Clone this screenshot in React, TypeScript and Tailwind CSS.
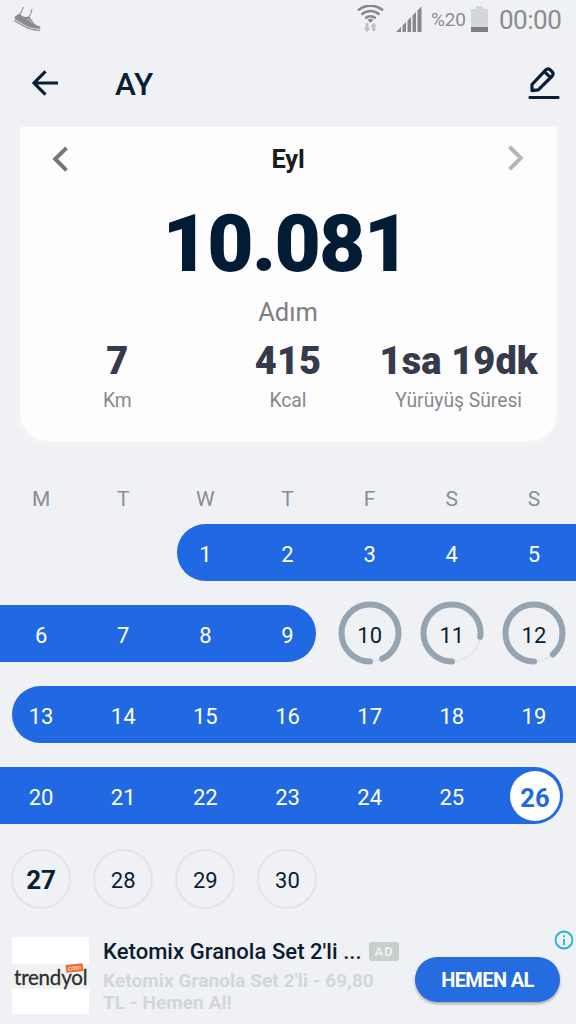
import React from "react";

type Day = {
  day: number
  type: "goal" | "ring" | "empty" | "selected" | "today"
  progress?: number
}

const weekDays = ["M", "T", "W", "T", "F", "S", "S"];

const stats = [
  { value: "7", label: "Km" },
  { value: "415", label: "Kcal" },
  { value: "1sa 19dk", label: "Yürüyüş Süresi" },
];

const goalDays = (from: number, to: number): Day[] =>
  Array.from({ length: to - from + 1 }, (_, i) => ({ day: from + i, type: "goal" }));

// bar = the blue streak behind the days of that week
const weeks: { bar: string, offset: number, days: Day[] }[] = [
  { bar: "ml-[177px] rounded-l-full", offset: 2, days: goalDays(1, 5) },
  {
    bar: "mr-[260px] rounded-r-full",
    offset: 0,
    days: [
      ...goalDays(6, 9),
      { day: 10, type: "ring", progress: 0.93 },
      { day: 11, type: "ring", progress: 0.772 },
      { day: 12, type: "ring", progress: 0.885 },
    ],
  },
  { bar: "ml-[12px] rounded-l-full", offset: 0, days: goalDays(13, 19) },
  { bar: "mr-[13px] rounded-r-full", offset: 0, days: [...goalDays(20, 25), { day: 26, type: "selected" }] },
  {
    bar: "hidden",
    offset: 0,
    days: [
      { day: 27, type: "today" },
      { day: 28, type: "empty" },
      { day: 29, type: "empty" },
      { day: 30, type: "empty" },
    ],
  },
];


function StatusBar() {
  return (
    <div className="flex h-10 items-center text-[#8b8c8f]">
      <svg className="ml-3 h-7 w-8 shrink-0" viewBox="0 0 32 28" fill="none">
        <path d="M3 10.5 7.5 7.5 Q11 12 15 10.8 L17.5 10.3 22 17.5 Q24 19.5 28 20.5 L28.5 22.5 Q20 23.5 12 18.7 L2.6 13Z" fill="#8b8b8d" />
        <path d="M2.3 14.5 12.5 20.6 Q20 24.8 28.3 24.2" stroke="#8b8b8d" strokeWidth="1.2" />
        <path d="M11.8 1 Q9.5 4 8.5 8 M19.9 3 Q19.8 7 17 10.5" stroke="#9b9b9d" strokeWidth="1.2" />
        <path d="m15 14 4-1.5m-2 3 4-1.5m-2 3 3-1" stroke="#d0d1d4" strokeWidth=".7" />
      </svg>

      <svg className="ml-auto -mt-[3px] h-7 w-[27px] shrink-0" viewBox="0 0 27 28" fill="none">
        <g stroke="#87888b" strokeWidth="2.5">
          <path d="M1 5.2Q13.5-4 26 5.2" />
          <path d="M4.5 9.4Q13.5 2.5 22.5 9.4" />
          <path d="M8.2 13.3Q13.5 9.2 18.8 13.3" />
        </g>
        <path d="M10.6 14.8Q13.5 12.5 16.4 14.8L13.5 18Z" fill="#87888b" />
        <path d="M8.5 18h3v5h2L10 27.3 6.7 23h1.8zM15.2 26h3v-4.5h1.8L16.7 17.5 13.5 21.5h1.7z" fill="#c0c1c4" />
      </svg>

      <svg className="ml-3 -mt-[2px] h-[26px] w-[26px] shrink-0" viewBox="0 0 26 26" fill="#87888b">
        <path d="M0 26 5 21v5zM6.5 19.5 10 16v10H6.5zM11.5 14.5 15 11v15h-3.5zM16.5 9.5 20 6v20h-3.5zM21.5 4.5 25.5 .5V26h-4z" />
      </svg>

      <span className="ml-[9px] w-[36px] text-[19px] tracking-[-0.2px]">%20</span>

      <svg className="ml-1 -mt-[3px] h-[26px] w-[17px] shrink-0" viewBox="0 0 17 26">
        <path d="M5 0h7v3h5v23H0V3h5z" fill="#d5d6d9" />
        <path d="M0 21h17v5H0z" fill="#7d7e81" />
      </svg>

      <span className="ml-[11px] mr-[14px] w-[63px] text-[26px] tracking-[-0.5px]">00:00</span>
    </div>
  );
}


function Header() {
  return (
    <div className="flex h-[87px] items-center text-[#081e35]">
      <svg className="ml-8 -mt-px h-[26px] w-[26px]" viewBox="0 0 26 26" fill="none" stroke="currentColor" strokeWidth="3.1">
        <path d="M26 13H2M13.5 1.3 2 13l11.5 11.7" />
      </svg>
      <h1 className="ml-[57px] pt-[3px] text-[31.5px] font-medium">AY</h1>
      <svg className="ml-auto mr-4 -mt-[2px] h-8 w-8" viewBox="0 0 32 32" fill="none" stroke="currentColor" strokeWidth="3.2" strokeLinejoin="round" strokeLinecap="round">
        <path d="M4 17.5 17.8 2.9Q19.8 .9 22 2.7L24.4 5Q26 6.9 24.2 9L10.3 22.8 4 23.6ZM16.5 4.7 22.5 10.6" />
        <path d="M1.8 30.5H30.2" strokeWidth="2.8" />
      </svg>
    </div>
  );
}


function Summary() {
  return (
    <div className="ml-5 mr-[19px] h-[314px] rounded-t-[3px] rounded-b-[28px] bg-[#fdfdfd] text-center shadow-[0_2px_8px_rgba(255,255,255,0.5)]">
      <div className="flex h-16 items-center justify-between">
        <svg className="ml-8 h-[26px] w-4" viewBox="0 0 16 26" fill="none" stroke="#777" strokeWidth="4">
          <path d="M14.5 1.8 3.2 13l11.3 11.3" />
        </svg>
        <span className="pt-[1px] text-[25.5px] font-bold tracking-[-0.2px] text-[#1b1b1b]">Eyl</span>
        <svg className="mr-[33px] h-[26px] w-4" viewBox="0 0 16 26" fill="none" stroke="#b5b5b5" strokeWidth="4">
          <path d="M1.5 .8 12.8 12 1.5 23.3" />
        </svg>
      </div>
      <div className="h-[104px] pr-[6px] text-[80px] leading-[107px] font-black tracking-[-1.7px] text-[#031c35]">10.081</div>
      <div className="h-[34px] pr-px text-[25.5px] leading-[34px] text-[#7e7f82]">Adım</div>
      <div className="ml-3 mr-[13px] grid grid-cols-3">
        {stats.map((stat) => (
          <div key={stat.label}>
            <div className="h-[62px] text-[38px] leading-[64px] font-black tracking-[0.1px] whitespace-nowrap text-[#37394c]">{stat.value}</div>
            <div className="h-[18px] text-[19.3px] leading-[20px] text-[#86898d]">{stat.label}</div>
          </div>
        ))}
      </div>
    </div>
  );
}


function DayCell({ day, type, progress = 0 }: Day) {

  if (type === "ring") {
    return (
      <div className="flex items-center justify-center text-[#0a1f33]">
        <svg className="absolute h-16 w-16 rotate-90" viewBox="0 0 64 64" fill="none">
          <circle cx="32" cy="32" r="28.5" stroke="#e4e6e9" strokeWidth="2" />
          <circle cx="32" cy="32" r="28.5" stroke="#96a4b2" strokeWidth="6" strokeLinecap="round" pathLength="1" strokeDasharray={`${progress} 1`} />
        </svg>
        <span className="pt-1">{day}</span>
      </div>
    );
  }

  if (type === "selected") {
    return (
      <div className="flex items-center justify-center pl-[2px]">
        <span className="h-[50px] w-[50px] rounded-full bg-white pt-1 text-center text-[25.5px] leading-[47px] font-bold text-[#2168e0]">{day}</span>
      </div>
    );
  }

  if (type === "goal") {
    return <div className="flex items-center justify-center pt-1 text-white">{day}</div>;
  }

  return (
    <div className="flex items-center justify-center">
      <span className={`flex h-[60px] w-[60px] shrink-0 items-center justify-center rounded-full border-2 border-[#e2e4e7] pt-1 text-[#0a1f33] ${type === "today" ? "text-[26px] font-bold" : ""}`}>{day}</span>
    </div>
  );
}


function Calendar() {
  return (
    <div className="mt-[47px]">
      <div className="mr-px grid h-5 grid-cols-7 text-center text-[21px] leading-[22px] text-[#8a8e93]">
        {weekDays.map((name, i) => (
          <span key={i}>{name}</span>
        ))}
      </div>
      <div className="mt-[15.5px] flex flex-col gap-[24.3px]">
        {weeks.map((week, i) => (
          <div key={i} className="grid h-[57px]">
            <div className={`col-start-1 row-start-1 bg-[#2069e2] ${week.bar}`} />
            <div className="col-start-1 row-start-1 mr-px grid grid-cols-7 text-[22px] leading-[53px]">
              {week.offset > 0 && <div className="col-span-2" />}
              {week.days.map((item) => (
                <DayCell key={item.day} {...item} />
              ))}
            </div>
          </div>
        ))}
      </div>
    </div>
  );
}


function AdBanner() {
  return (
    <div className="mt-[31.3px] flex h-[87px]">
      <div className="ml-3 h-[77px] w-[77px] shrink-0 bg-white pt-[27px]">
        <div className="relative h-[25px] bg-[#f1f2f4] pl-[2px] font-['Lato',sans-serif]">
          <span className="block text-[20.5px] leading-[26px] tracking-[-0.2px] text-[#2e2e2e] [-webkit-text-stroke:0.3px_#2e2e2e]">trendyol</span>
          <span className="absolute top-0 right-[6px] h-[8px] w-[17px] -rotate-6 bg-[#f26b2c] text-center text-[7px] leading-[7px] text-white">com</span>
        </div>
      </div>

      <div className="ml-[14px] w-[312px] shrink-0">
        <div className="flex h-[30px] items-center">
          <span className="w-[266px] text-[22px] font-medium tracking-[0.05px] whitespace-nowrap text-[#0b1d31]">Ketomix Granola Set 2'li ...</span>
          <span className="h-[19px] w-[30px] rounded-[3px] bg-[#c5cfcb] text-center text-[13px] leading-[19px] font-bold tracking-[0.8px] text-[#edf1f0]">AD</span>
        </div>
        <p className="mt-[3px] text-[19px] leading-[22px] font-bold tracking-[0.08px] whitespace-nowrap text-[#d3d6d9]">
          Ketomix Granola Set 2'li - 69,80<br />
          TL - Hemen Al!
        </p>
      </div>

      <div className="mt-5 h-[45px] w-[145px] shrink-0 rounded-full bg-[#246ce0] text-center text-[20px] leading-[47px] font-bold tracking-[-0.6px] text-white shadow-[0_2px_3px_rgba(0,0,0,0.3)]">
        HEMEN AL
      </div>
      <svg className="-ml-[6px] -mt-[7px] h-5 w-5 shrink-0" viewBox="0 0 20 20" fill="none" stroke="#22b3cd" strokeWidth="1.8">
        <circle cx="10" cy="10" r="8.5" />
        <path d="M10 9v6M10 5.3v2" />
      </svg>
    </div>
  );
}

export default function App() {
  return (
    <div className="h-[1024px] w-[576px] overflow-hidden bg-[#eff1f5] font-['Roboto',sans-serif]">
      <StatusBar />
      <Header />
      <Summary />
      <Calendar />
      <AdBanner />
    </div>
  );
}
